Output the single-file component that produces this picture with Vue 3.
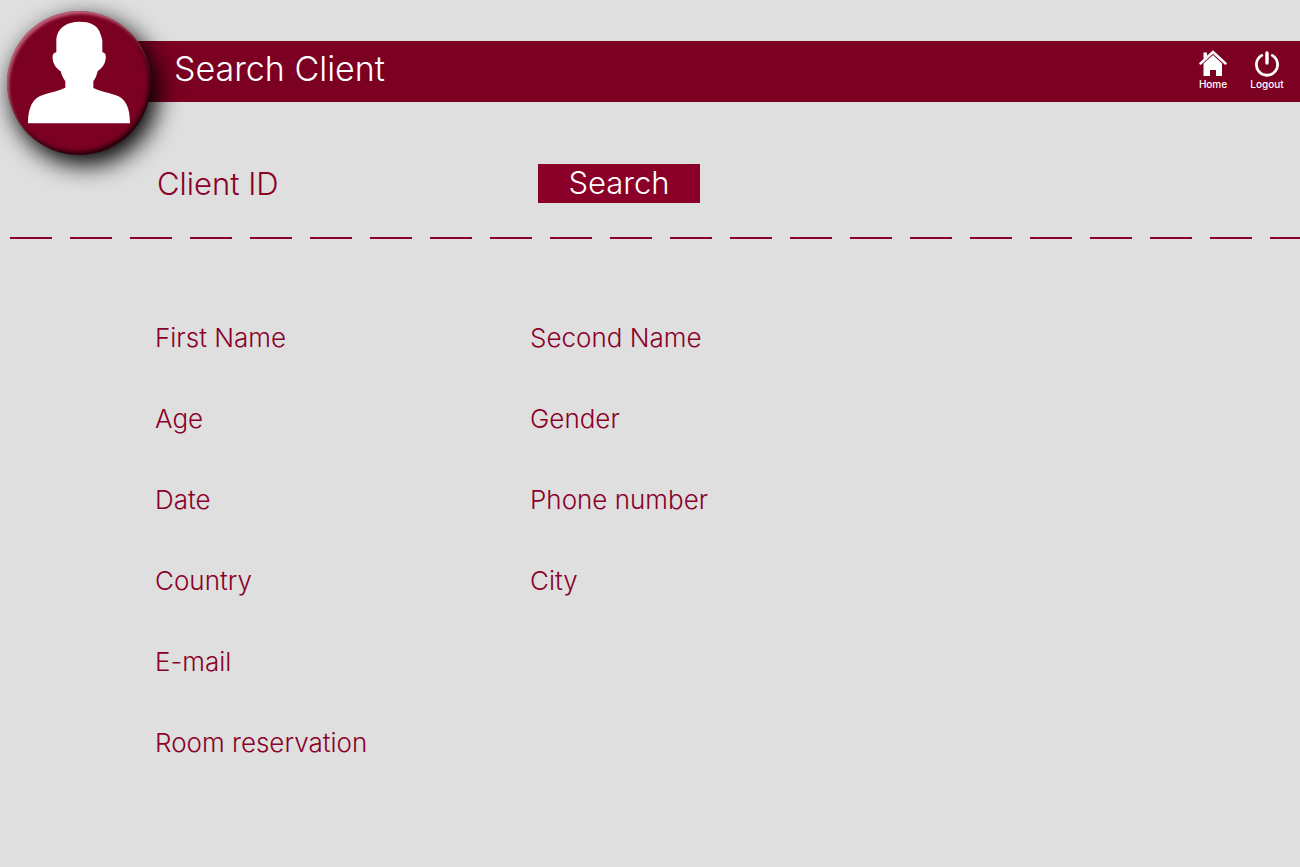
<script setup>
import { ref, reactive } from 'vue'

const clientId = ref('')
const fields = [
  { id: 'first-name', label: 'First Name' },
  { id: 'second-name', label: 'Second Name' },
  { id: 'age', label: 'Age' },
  { id: 'gender', label: 'Gender' },
  { id: 'date', label: 'Date' },
  { id: 'phone', label: 'Phone number' },
  { id: 'country', label: 'Country' },
  { id: 'city', label: 'City' },
  { id: 'email', label: 'E-mail', wide: true },
  { id: 'room', label: 'Room reservation', wide: true },
]
const client = reactive(Object.fromEntries(fields.map((f) => [f.id, ''])))
</script>

<template>
  <div class="page">
    <header class="bar">
      <div class="avatar">
        <svg viewBox="21 33 432 432" aria-hidden="true">
          <path
            fill="#fff"
            d="M238 65C221 65 207 68 193 77C175 89 169 105 169 124V157C160 158 157 166 158 177C160 194 170 206 182 214C185 227 191 237 196 244V263C178 272 153 277 130 284C98 293 84 323 84 370H390C390 323 377 294 346 285C323 278 298 273 280 264V244C286 237 290 227 293 214C306 205 315 193 317 178C319 166 316 158 307 157V124C307 111 300 102 298 93C289 75 270 65 238 65Z"
          />
        </svg>
      </div>
      <h1>Search Client</h1>
      <nav>
        <a href="#home">
          <svg width="28" height="28" viewBox="0 0 28 28" aria-hidden="true">
            <path d="M1.5 14.5L14 3L26.5 14.5" fill="none" stroke="#fff" stroke-width="2.4" stroke-linecap="round" />
            <path d="M4.5 3.5H8V6.8L4.5 10Z" fill="#fff" />
            <path d="M14 6L23 14.6V27H17V21H11V27H4.5V14.6Z" fill="#fff" />
          </svg>
          <span>Home</span>
        </a>
        <a href="#logout">
          <svg width="28" height="28" viewBox="0 0 28 28" aria-hidden="true">
            <path
              d="M8.8 6.4A10.6 10.6 0 1 0 19.2 6.4"
              fill="none"
              stroke="#fff"
              stroke-width="2.8"
              stroke-linecap="round"
            />
            <path d="M14 4V14" stroke="#fff" stroke-width="3.4" stroke-linecap="round" />
          </svg>
          <span>Logout</span>
        </a>
      </nav>
    </header>

    <form class="search" @submit.prevent>
      <label for="client-id">Client ID</label>
      <input id="client-id" v-model="clientId" type="text" />
      <button type="submit">Search</button>
    </form>

    <hr />

    <main class="fields">
      <div v-for="f in fields" :key="f.id" class="field" :class="{ wide: f.wide }">
        <label :for="f.id">{{ f.label }}</label>
        <input :id="f.id" v-model="client[f.id]" type="text" readonly />
      </div>
    </main>
  </div>
</template>

<style>
html,
body {
  background: #dfdfdf;
}
</style>

<style scoped>
.page {
  box-sizing: border-box;
  min-height: 100vh;
  padding-top: 41px;
  background: #dfdfdf;
  color: #8a0029;
  font-family: "Century Gothic", Inter, "Liberation Sans", sans-serif;
  font-weight: 300;
}

.bar {
  position: relative;
  display: flex;
  align-items: center;
  height: 61px;
  margin-left: 79px;
  padding: 0 15px 0 95px;
  box-sizing: border-box;
  background: #7b0022;
  color: #fff;
}

.avatar {
  position: absolute;
  left: -72px;
  top: -30px;
  width: 144px;
  height: 144px;
  border-radius: 50%;
  background: #7b0022;
  box-shadow:
    6px 9px 24px 1px #000,
    inset 2px 3px 3px rgba(255, 190, 205, 0.5),
    inset -2px -3px 4px rgba(0, 0, 0, 0.75);
}

.avatar svg {
  display: block;
  width: 100%;
  height: 100%;
}

h1 {
  flex: 1;
  margin: 0;
  padding-bottom: 6px;
  font-size: 34px;
  line-height: 40px;
  font-weight: 300;
}

nav {
  display: flex;
  gap: 18px;
  padding-bottom: 4px;
}

nav a {
  display: flex;
  flex-direction: column;
  align-items: center;
  width: 36px;
  color: #fff;
  font-size: 10px;
  line-height: 14px;
  font-weight: 500;
  text-decoration: none;
}

input {
  flex: 1;
  min-width: 0;
  padding: 0;
  border: 0;
  outline: 0;
  background: transparent;
  color: inherit;
  font: inherit;
}

.search {
  display: flex;
  align-items: center;
  width: 543px;
  margin: 62px 0 34px 157px;
  font-size: 31px;
  line-height: 39px;
}

.search button {
  width: 162px;
  height: 39px;
  padding: 0 0 2px;
  border: 0;
  background: #8a0029;
  color: #fff;
  font: inherit;
  line-height: 37px;
  cursor: pointer;
}

hr {
  height: 2px;
  margin: 0 0 0 10px;
  border: 0;
  background: repeating-linear-gradient(to right, #8a0029 0 42px, transparent 42px 60px);
}

.fields {
  display: grid;
  grid-template-columns: 375px 1fr;
  grid-auto-rows: 81px;
  padding: 58px 155px 0;
  font-size: 26px;
  line-height: 32px;
}

.field {
  display: flex;
  align-items: center;
  gap: 12px;
}

.wide {
  grid-column: 1 / -1;
}
</style>
